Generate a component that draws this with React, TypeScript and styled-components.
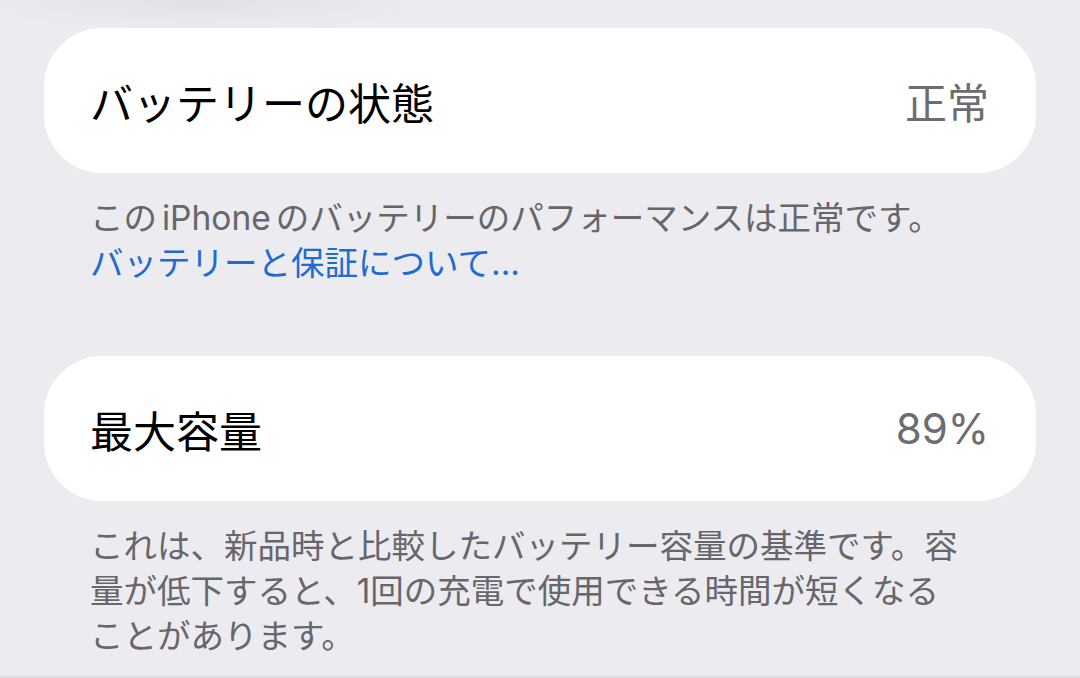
import React from "react";
import styled, { createGlobalStyle } from "styled-components";

const GlobalStyle = createGlobalStyle`
  html, body {
    margin: 0;
    padding: 0;
    background: #ebebf0;
  }
  body {
    font-family: "Inter", "Noto Sans CJK JP", sans-serif;
    -webkit-font-smoothing: antialiased;
  }
`;

const App: React.FC = () => {
  return (
    <>
      <GlobalStyle />
      <Page>
        <Section>
          <Card>
            <Label>バッテリーの状態</Label>
            <Value>正常</Value>
          </Card>
          <Footer>
            この<Gap />iPhone<Gap />のバッテリーのパフォーマンスは正常です。
            <br />
            <Link href="#">バッテリーと保証について...</Link>
          </Footer>
        </Section>

        <Section>
          <Card>
            <Label>最大容量</Label>
            <Value>89%</Value>
          </Card>
          <Footer>
            これは、新品時と比較したバッテリー容量の基準です。容
            <br />
            量が低下すると、1回の充電で使用できる時間が短くなる
            <br />
            ことがあります。
          </Footer>
        </Section>
      </Page>
    </>
  );
};

const Page = styled.main`
  width: 1080px;
  height: 678px;
  box-sizing: border-box;
  padding-top: 28px;
  display: flex;
  flex-direction: column;
  gap: 70px;
  overflow: hidden;
  border-bottom: 2px solid #dcdce1;
  background: radial-gradient(
      ellipse 240px 30px at 200px 0px,
      rgba(205, 205, 212, 0.35),
      rgba(235, 235, 240, 0)
    ),
    #ebebf0;
`;

const Section = styled.section`
  display: flex;
  flex-direction: column;
`;

const Card = styled.div`
  margin: 0 44px;
  height: 145px;
  box-sizing: border-box;
  padding: 0 47px 0 46px;
  background: #ffffff;
  border-radius: 58px;
  display: flex;
  align-items: center;
  justify-content: space-between;
`;

const Label = styled.span`
  font-size: 43px;
  font-weight: 400;
  color: #000000;
`;

const Value = styled.span`
  font-size: 42px;
  font-weight: 400;
  color: #6c6c71;
`;

const Footer = styled.p`
  margin: 23px 0 0;
  padding: 0 90px;
  font-size: 33.5px;
  line-height: 45px;
  color: #66666b;
  white-space: nowrap;
`;

const Gap = styled.span`
  display: inline-block;
  width: 5px;
`;

const Link = styled.a`
  color: #1f6bd0;
  text-decoration: none;
`;

export default App;
